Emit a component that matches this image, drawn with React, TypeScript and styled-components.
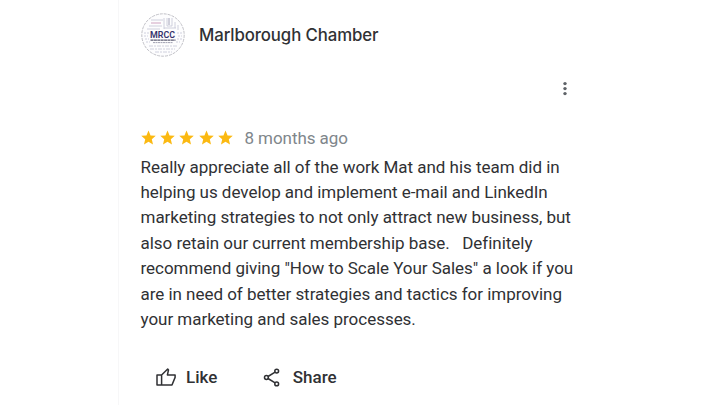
import React from 'react';
import styled, { createGlobalStyle } from 'styled-components';

const GlobalStyle = createGlobalStyle`
  * {
    box-sizing: border-box;
  }

  body {
    margin: 0;
    background: #fff;
    font-family: Roboto, 'Liberation Sans', sans-serif;
    color: #303134;
  }
`;

const Page = styled.main`
  display: flex;
  width: 720px;
  height: 405px;
  padding-left: 118px;
  overflow: hidden;
`;

const Review = styled.article`
  display: flex;
  flex-direction: column;
  width: 482px;
  padding: 13px 0 0 21.5px;
  border-left: 1px solid #f7f7f8;
`;

const Header = styled.header`
  display: flex;
  align-items: center;
  gap: 14.5px;
  height: 44px;
`;

const Name = styled.h1`
  margin: 0;
  font-family: Inter, Roboto, sans-serif;
  font-size: 16.8px;
  font-weight: 500;
  line-height: 24px;
  letter-spacing: -0.1px;
  white-space: nowrap;
`;

const MenuRow = styled.div`
  display: flex;
  justify-content: flex-end;
  height: 64px;
  padding: 24px 29px 0 0;
`;

const MenuButton = styled.button`
  display: flex;
  width: 12px;
  height: 16px;
  padding: 0;
  border: 0;
  background: none;
`;

const Rating = styled.div`
  display: flex;
  align-items: center;
  height: 33.5px;
`;

const Stars = styled.div`
  display: flex;
  gap: 4.4px;
  margin-right: 11.4px;
`;

const Age = styled.span`
  font-size: 17px;
  line-height: 24px;
  letter-spacing: -0.06px;
  color: #80868b;
`;

const Body = styled.p`
  margin: 0;
  font-size: 17px;
  line-height: 25.4px;
  letter-spacing: -0.03px;
  white-space: pre;
`;

const Actions = styled.footer`
  display: flex;
  gap: 44.5px;
  padding: 32.5px 0 0 14.5px;
`;

const Action = styled.button`
  display: flex;
  align-items: center;
  gap: 9px;
  height: 24px;
  padding: 0;
  border: 0;
  background: none;
  font-family: inherit;
  font-size: 17px;
  font-weight: 500;
  color: inherit;
`;

const lines = [
  'Really appreciate all of the work Mat and his team did in',
  'helping us develop and implement e-mail and LinkedIn',
  'marketing strategies to not only attract new business, but',
  'also retain our current membership base.   Definitely',
  'recommend giving "How to Scale Your Sales" a look if you',
  'are in need of better strategies and tactics for improving',
  'your marketing and sales processes.',
];

const Logo: React.FC = () => (
  <svg width="44" height="44" viewBox="0 0 44 44">
    <circle cx="22" cy="22" r="21.2" fill="#fdfdfe" stroke="#b9b9c0" strokeWidth="0.9" strokeDasharray="3 1" />
    <g fill="none" stroke="#c3c4d6" strokeWidth="0.8">
      <path d="M10 7h12M8 13h13M6 16h13M23 5v11M23 15h12M26 5v8h5V5M34 9v6M37 12v5" />
      <path d="M3 20h5M3 23h4M4 26h4M5 29h4M36 20h5M37 23h4M36 26h5M35 29h4" strokeDasharray="2 1" />
      <path d="M8 33h28M9 36h25M14 39h17" strokeDasharray="4 1 2 1" />
    </g>
    <path d="M10 10h10" stroke="#cfa3c0" />
    <path d="M28 5v7" stroke="#8a8aa8" strokeWidth="0.8" />
    <text x="9" y="25.2" fontSize="8.6" fontWeight="600" fill="#34326c" textLength="25" lengthAdjust="spacingAndGlyphs">
      MRCC
    </text>
    <path d="M9.5 27.2h25" stroke="#5b5b72" strokeWidth="1.3" strokeDasharray="3 .4" />
    <path d="M12 29.6h20" stroke="#9595a8" strokeWidth="0.9" strokeDasharray="2 .5" />
  </svg>
);

const Star: React.FC = () => (
  <svg width="15" height="15" viewBox="0 0 24 24" fill="#fbb912">
    <path d="M12 .9l3.3 7.7 8.3.7-6.3 5.5 1.9 8.2-7.2-4.4L4.8 23l1.9-8.2L.4 9.3l8.3-.7z" />
  </svg>
);

const LikeIcon: React.FC = () => (
  <svg width="22" height="22" viewBox="0 0 22 22" fill="none" stroke="#303134" strokeWidth="1.5" strokeLinejoin="round">
    <path d="M2 9h4.6v10H2zM6.6 9l6.1-6 .8.9-1.1 5.1h7.7v2.4L17 19H6.6" />
  </svg>
);

const ShareIcon: React.FC = () => (
  <svg width="22" height="22" viewBox="0 0 22 22" fill="none" stroke="#303134" strokeWidth="1.5">
    <path d="M6 10.5l7.1-4.4M6 12.5l7.1 4.4" />
    <circle cx="4.4" cy="11.5" r="1.9" />
    <circle cx="14.7" cy="5.1" r="1.9" />
    <circle cx="14.7" cy="17.9" r="1.9" />
  </svg>
);

export default function App() {
  return (
    <Page>
      <GlobalStyle />
      <Review>
        <Header>
          <Logo />
          <Name>Marlborough Chamber</Name>
        </Header>
        <MenuRow>
          <MenuButton aria-label="More options">
            <svg width="12" height="16" viewBox="0 0 12 16" fill="#5f6368">
              <circle cx="6" cy="2.6" r="1.7" />
              <circle cx="6" cy="7.6" r="1.7" />
              <circle cx="6" cy="12.6" r="1.7" />
            </svg>
          </MenuButton>
        </MenuRow>
        <Rating>
          <Stars>
            {[1, 2, 3, 4, 5].map(n => (
              <Star key={n} />
            ))}
          </Stars>
          <Age>8 months ago</Age>
        </Rating>
        <Body>{lines.join('\n')}</Body>
        <Actions>
          <Action>
            <LikeIcon />
            Like
          </Action>
          <Action>
            <ShareIcon />
            Share
          </Action>
        </Actions>
      </Review>
    </Page>
  );
}
